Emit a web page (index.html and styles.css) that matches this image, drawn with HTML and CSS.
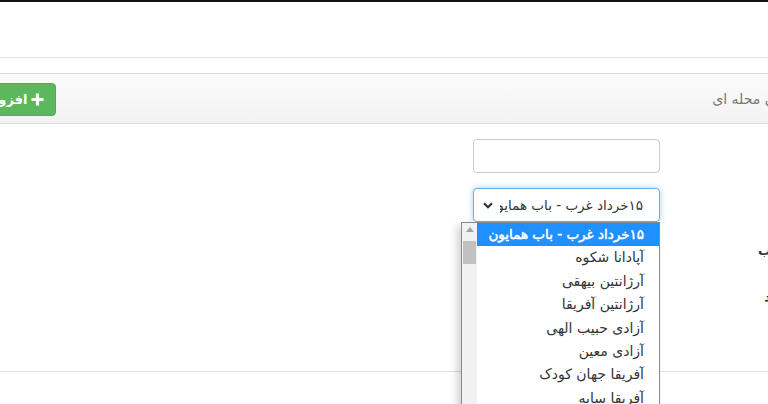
FILE: index.html
```html
<!DOCTYPE html>
<html lang="fa">
<head>
<meta charset="utf-8">
<title>نواحی محله ای</title>
<link rel="stylesheet" href="styles.css">
</head>
<body>
<div class="topbar"></div>
<div class="page-head"></div>
<div class="stage">
  <div class="card">
    <div class="card-head">
      <div class="title">نواحی محله ای</div>
      <button class="btn-add" type="button">
        <svg class="plus" width="13" height="13" viewBox="0 0 13 13"><path d="M6.5 0.5v12M0.5 6.5h12" stroke="#fff" stroke-width="3.2"/></svg>
        <span>افزودن الگو</span>
      </button>
    </div>
    <div class="card-body">
      <div class="row r1">
        <label class="lbl">الگو</label>
        <div class="ctl"><div class="input"></div></div>
      </div>
      <div class="row r2">
        <label class="lbl">نام</label>
        <div class="ctl">
          <div class="select">
            <span class="sel-text">۱۵خرداد غرب - باب همایون</span>
            <svg class="chev" width="10" height="7" viewBox="0 0 10 7"><path d="M1 1.2l4 4 4-4" fill="none" stroke="#333" stroke-width="2.2"/></svg>
          </div>
          <div class="dropdown">
            <div class="scroll">
              <svg class="arrow" width="8" height="5" viewBox="0 0 8 5"><path d="M0 5L4 0l4 5z" fill="#a3a3a3"/></svg>
              <div class="thumb"></div>
            </div>
            <ul class="options">
              <li class="active">۱۵خرداد غرب - باب همایون</li>
              <li>آپادانا شکوه</li>
              <li>آرژانتین بیهقی</li>
              <li>آرژانتین آفریقا</li>
              <li>آزادی حبیب الهی</li>
              <li>آزادی معین</li>
              <li>آفریقا جهان کودک</li>
              <li>آفریقا سایه</li>
            </ul>
          </div>
        </div>
      </div>
      <div class="row r3">
        <label class="lbl">ترتیب</label>
        <div class="ctl"><div class="input"></div></div>
      </div>
      <div class="row r4">
        <label class="lbl">تعداد</label>
        <div class="ctl"><div class="input"></div></div>
      </div>
    </div>
    <div class="card-foot"></div>
  </div>
</div>
</body>
</html>
```
FILE: styles.css
```css
html, body {
  margin: 0;
  padding: 0;
  background: #fff;
  overflow: hidden;
  font-family: "DejaVu Sans", sans-serif;
}
.topbar {
  height: 2px;
  background: #111;
}
.page-head {
  height: 55px;
  border-bottom: 1px solid #e3e3e3;
  margin-bottom: 15px;
}
.stage {
  width: 883px;
  margin-left: -68px;
  direction: rtl;
}
.card {
  border-top: 1px solid #ddd;
}
.card-head {
  height: 50px;
  box-sizing: border-box;
  padding: 0 15px 0 7px;
  display: flex;
  align-items: center;
  justify-content: space-between;
  background: linear-gradient(#fbfbfb, #f3f3f3);
  border-bottom: 1px solid #ddd;
}
.title {
  color: #777;
  font-size: 14px;
}
.btn-add {
  display: flex;
  align-items: center;
  gap: 4px;
  height: 33px;
  padding: 0 11px;
  margin-top: 1px;
  background: #5cb85c;
  border: 1px solid #4cae4c;
  border-radius: 4px;
  color: #fff;
  font-family: inherit;
  font-weight: bold;
  font-size: 13px;
  direction: rtl;
}
.card-body {
  height: 247px;
  box-sizing: border-box;
  padding: 15px;
}
.row {
  display: flex;
  align-items: center;
  height: 34px;
}
.r1 { margin-bottom: 15px; }
.r2 { margin-bottom: 11px; }
.r3 { margin-bottom: 12px; }
.lbl {
  width: 135px;
  padding-right: 5px;
  font-weight: bold;
  font-size: 13px;
  color: #333;
}
.ctl {
  position: relative;
  width: 187px;
  height: 34px;
}
.input {
  height: 34px;
  box-sizing: border-box;
  border: 1px solid #ccc;
  border-radius: 4px;
  background: #fff;
}
.select {
  height: 34px;
  box-sizing: border-box;
  border: 1px solid #66afe9;
  border-radius: 4px;
  box-shadow: 0 0 6px rgba(102, 175, 233, .6);
  background: #fff;
  display: flex;
  align-items: center;
  padding: 0 16px 0 9px;
  gap: 7px;
}
.sel-text {
  flex: 1;
  min-width: 0;
  overflow: hidden;
  white-space: nowrap;
  font-size: 13.5px;
  color: #333;
}
.chev { flex: none; }
.dropdown {
  position: absolute;
  top: 34px;
  right: 0;
  width: 199px;
  height: 200px;
  box-sizing: border-box;
  border: 1px solid #8a8a8a;
  background: #fff;
  box-shadow: -4px 4px 8px rgba(0, 0, 0, .18);
  display: flex;
  direction: ltr;
  z-index: 5;
}
.scroll {
  width: 15px;
  flex: none;
  background: #f1f1f1;
  display: flex;
  flex-direction: column;
  align-items: center;
}
.arrow { margin-top: 4px; }
.thumb {
  width: 13px;
  height: 23px;
  margin-top: 9px;
  background: #c1c1c1;
}
.options {
  flex: 1;
  min-width: 0;
  overflow: hidden;
  margin: 0;
  padding: 0;
  list-style: none;
  direction: rtl;
}
.options li {
  height: 23.4px;
  line-height: 23.4px;
  padding-right: 15px;
  font-size: 14px;
  color: #333;
  white-space: nowrap;
  overflow: hidden;
}
.options li.active {
  background: #1e90ff;
  color: #fff;
  font-size: 13.5px;
  -webkit-text-stroke: 0.5px #fff;
}
.card-foot {
  border-top: 1px solid #ddd;
  height: 40px;
}
```
